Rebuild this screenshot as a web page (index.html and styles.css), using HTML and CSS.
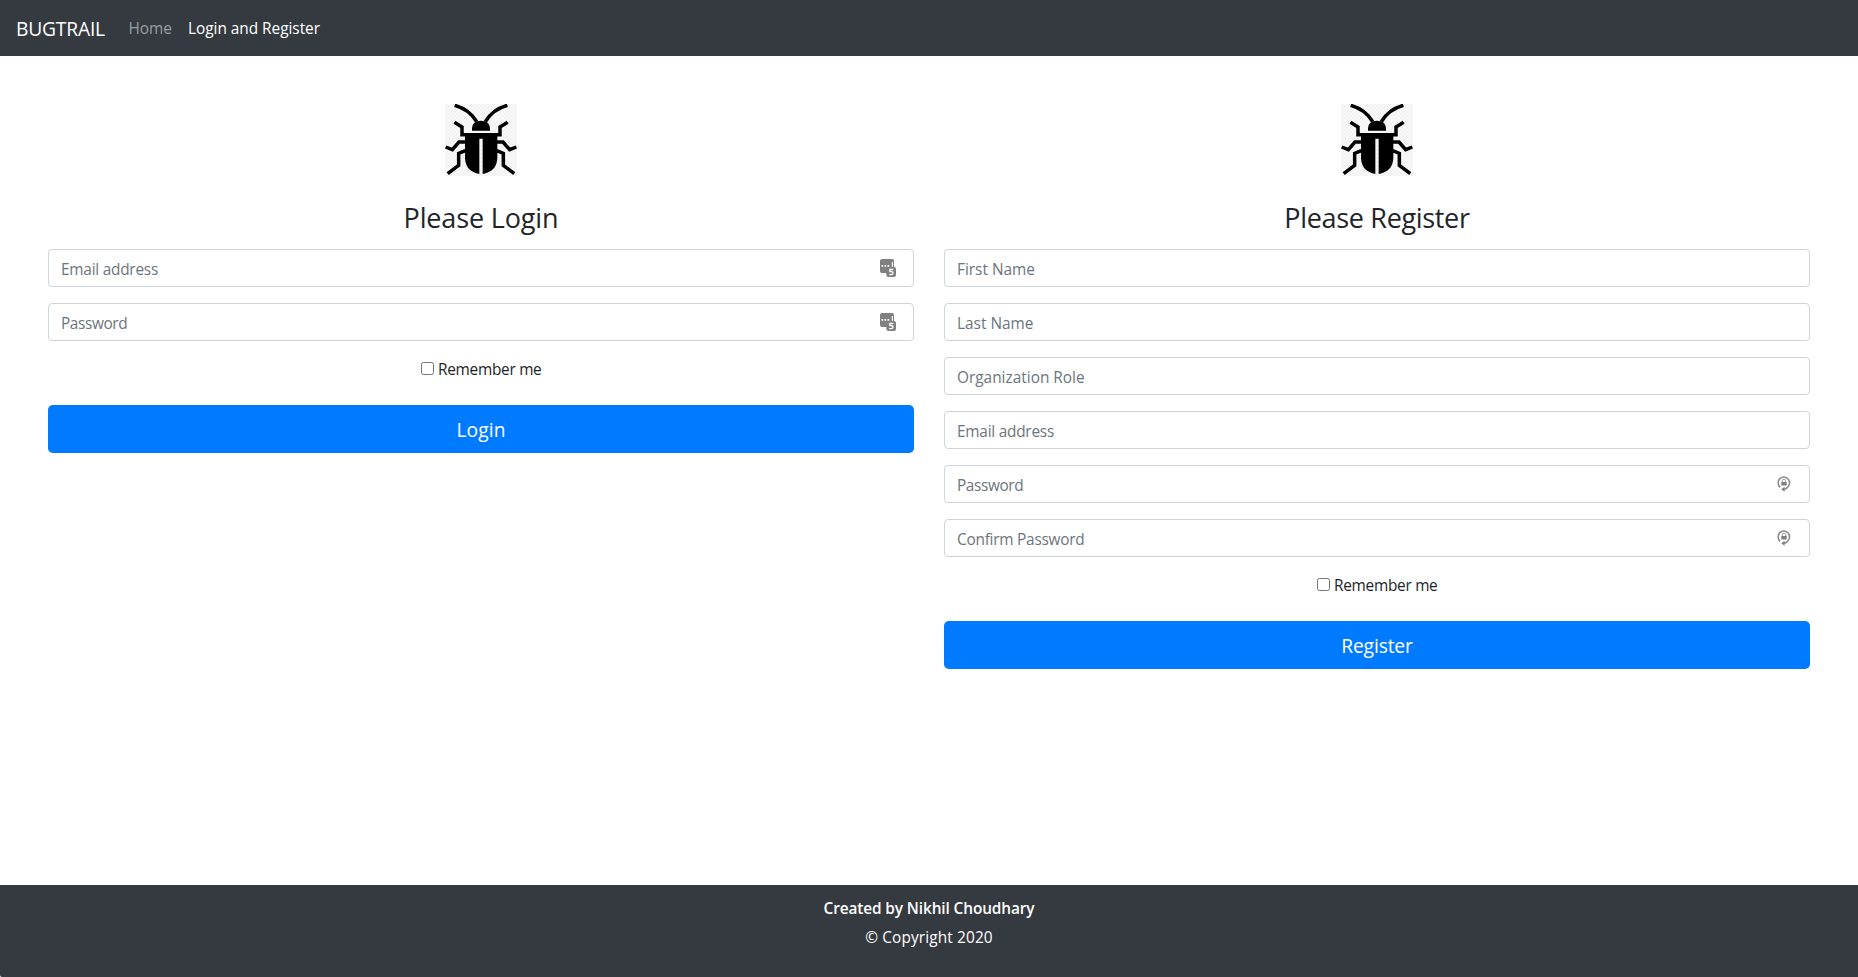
FILE: index.html
```html
<!DOCTYPE html>
<html lang="en">
<head>
<meta charset="utf-8">
<title>BUGTRAIL</title>
<link rel="stylesheet" href="styles.css">
</head>
<body>
<svg class="defs" aria-hidden="true">
  <defs>
    <pattern id="checks" width="12" height="12" patternUnits="userSpaceOnUse">
      <rect width="12" height="12" fill="#f8f8f8"/>
      <path d="M0 0h6v6H0zM6 6h6v6H6z" fill="#f3f3f3"/>
    </pattern>
    <symbol id="bug" viewBox="45 27 216 216">
      <rect x="45" y="27" width="216" height="216" fill="url(#checks)"/>
      <g fill="none" stroke="#000" stroke-width="10.5">
        <path d="M74 31Q118 43 140 80M232 31Q188 43 166 80"/>
        <path d="M73 82L96 96V119H210V96L233 82"/>
        <path d="M106 141H87L67 164L47 156M200 141H219L239 164L259 156"/>
        <path d="M106 167L86 175V211L53 236M200 167L220 175V211L253 236"/>
      </g>
      <path d="M126 107V99Q128 77 153 77Q178 77 180 99V107Z"/>
      <path d="M105 117H202V190Q200 230 158 237V131H148V237Q107 230 105 190Z"/>
    </symbol>
    <symbol id="vault" viewBox="0 0 16 18">
      <path fill="#808080" d="M2 0H12Q14 0 14 2V8H14.200Q16 8 16 10V16Q16 18 14 18H8.500Q6.500 18 6.300 16V14H2Q0 14 0 12V2Q0 0 2 0Z"/>
      <path fill="#fff" d="M1.500 6H3.200V7.700H1.500zM4.500 6H6.200V7.700H4.500zM7.500 6H9.200V7.700H7.500zM11.800 3H13V7.700H11.800z"/>
      <path fill="none" stroke="#fff" stroke-width="1.300" d="M13.300 10.500H9.900V12.700H11.600Q13 12.800 13 14.100Q13 15.600 11.300 15.600H9.200"/>
    </symbol>
    <symbol id="generate" viewBox="0 0 14 17">
      <path fill="none" stroke="#8c8c8c" stroke-width="1.600" d="M3.100 12.300A5.700 5.900 0 1 1 10.200 12.600Q9 13.900 7 14.200"/>
      <path fill="#808080" d="M4.200 14.200L7.600 11.700V16.800ZM4.300 7H9.700V10.500H4.300z"/>
      <path fill="none" stroke="#999" stroke-width="1" d="M5.300 7V5.700Q5.300 4.200 7 4.200Q8.700 4.200 8.700 5.700V7"/>
    </symbol>
  </defs>
</svg>

<nav class="navbar">
  <a class="brand">BUGTRAIL</a>
  <a class="nav-link">Home</a>
  <a class="nav-link active">Login and Register</a>
</nav>

<main class="forms">
  <form class="form">
    <svg class="logo"><use href="#bug"/></svg>
    <h3 class="title title-login">Please Login</h3>
    <div class="field"><input class="control tight" type="email" placeholder="Email address"><svg class="vault-icon"><use href="#vault"/></svg></div>
    <div class="field"><input class="control tighter" type="password" placeholder="Password"><svg class="vault-icon"><use href="#vault"/></svg></div>
    <label class="remember"><input class="check" type="checkbox"><span class="remember-text">Remember me</span></label>
    <button class="submit submit-login" type="button">Login</button>
  </form>
  <form class="form">
    <svg class="logo"><use href="#bug"/></svg>
    <h3 class="title title-register">Please Register</h3>
    <div class="field"><input class="control" type="text" placeholder="First Name"></div>
    <div class="field"><input class="control" type="text" placeholder="Last Name"></div>
    <div class="field"><input class="control" type="text" placeholder="Organization Role"></div>
    <div class="field"><input class="control tight" type="email" placeholder="Email address"></div>
    <div class="field"><input class="control tighter" type="password" placeholder="Password"><svg class="generate-icon"><use href="#generate"/></svg></div>
    <div class="field"><input class="control tight" type="password" placeholder="Confirm Password"><svg class="generate-icon"><use href="#generate"/></svg></div>
    <label class="remember"><input class="check" type="checkbox"><span class="remember-text">Remember me</span></label>
    <button class="submit submit-register" type="button">Register</button>
  </form>
</main>

<footer class="footer">
  <strong class="author">Created by Nikhil Choudhary</strong>
  <span class="copyright">© Copyright 2020</span>
</footer>
</body>
</html>
```
FILE: styles.css
```css
* { box-sizing: border-box; }
body {
  margin: 0;
  height: 100vh;
  display: flex;
  flex-direction: column;
  overflow: hidden;
  background: #fff;
  color: #212529;
  font: 15.4px/24px "Open Sans", sans-serif;
}
.defs { position: absolute; width: 0; height: 0; }
.navbar {
  height: 56px;
  flex: none;
  display: flex;
  align-items: center;
  padding: 2px 16px 0;
  background: #343a40;
}
.brand { margin-right: 16px; width: 88.5px; color: #fff; font-size: 19.25px; line-height: 30px; letter-spacing: -.2px; white-space: nowrap; }
.nav-link { padding: 8px; color: rgba(255, 255, 255, .5); white-space: nowrap; }
.nav-link.active { color: #fff; letter-spacing: -.03px; }
.forms {
  flex: 1;
  display: grid;
  grid-template-columns: 1fr 1fr;
  gap: 30px;
  align-items: start;
  padding: 48px 48px 0;
}
.form { display: flex; flex-direction: column; align-items: center; }
.logo { width: 72px; height: 72px; margin-bottom: 25px; }
.title { margin: 0 0 14px; font-size: 27px; font-weight: 400; line-height: 34px; }
.title-login { letter-spacing: -.15px; }
.title-register { letter-spacing: -.33px; }
.field { position: relative; width: 100%; margin-bottom: 16px; }
.control {
  display: block;
  width: 100%;
  height: 38px;
  padding: 7px 12px 5px;
  border: 1px solid #ced4da;
  border-radius: 4px;
  background: #fff;
  font: inherit;
}
.control::placeholder { color: #6c757d; opacity: 1; }
.tight { letter-spacing: -.24px; }
.tighter { letter-spacing: -.4px; }
.vault-icon { position: absolute; right: 18px; top: 10px; width: 16px; height: 18px; }
.generate-icon { position: absolute; right: 19px; top: 10px; width: 14px; height: 17px; }
.remember { display: flex; height: 24px; margin-bottom: 24px; letter-spacing: -.28px; }
.remember-text { padding-top: 1px; }
.check { width: 13px; height: 13px; margin: 5px 4.5px 0 0; }
.submit {
  width: 100%;
  height: 48px;
  padding: 1px 0 0;
  border: 0;
  border-radius: 4.8px;
  background: #007bff;
  color: #fff;
  font: 19.25px/30px "Open Sans", sans-serif;
}
.submit-login { letter-spacing: .1px; }
.submit-register { letter-spacing: -.15px; }
.footer {
  flex: none;
  height: 92px;
  padding-top: 12px;
  display: flex;
  flex-direction: column;
  align-items: center;
  gap: 5px;
  background: #343a40;
  border-bottom-left-radius: 2px;
  color: #fff;
}
.author { font-weight: 600; letter-spacing: -.11px; }
.copyright { letter-spacing: .12px; }
```
